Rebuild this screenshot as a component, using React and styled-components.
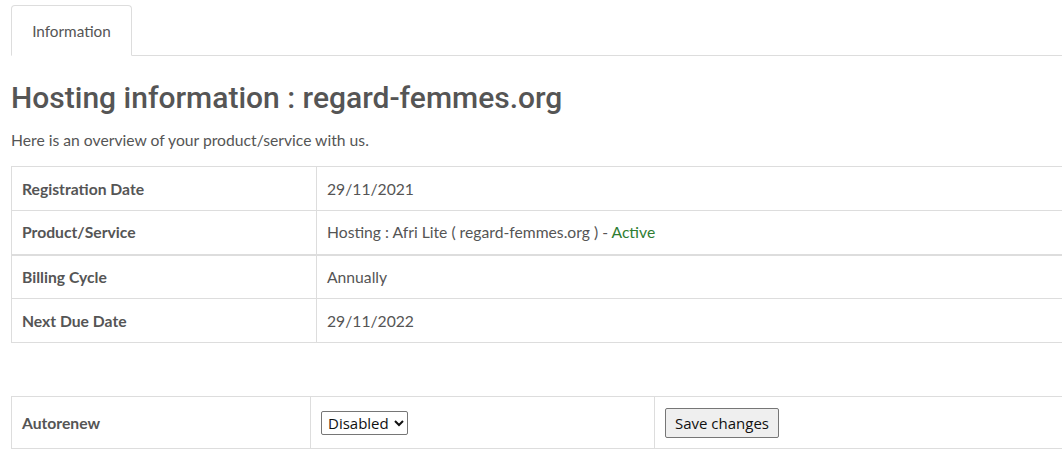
import React, { useState } from "react";
import styled, { createGlobalStyle } from "styled-components";

const Global = createGlobalStyle`
  body {
    margin: 0;
    background: #fff;
    overflow: hidden;
    font-family: "Lato", "Liberation Sans", sans-serif;
    color: #555;
  }
`;

const Page = styled.div`
  padding: 5px 0 0 11px;
  overflow: hidden;
`;

const Tabs = styled.div`
  display: flex;
  border-bottom: 1px solid #ddd;
  height: 50px;
`;

const Tab = styled.div`
  width: 121px;
  height: 51px;
  box-sizing: border-box;
  border: 1px solid #ddd;
  border-bottom-color: #fff;
  border-radius: 4px 4px 0 0;
  background: #fff;
  display: flex;
  align-items: center;
  justify-content: center;
  font-size: 15.3px;
  color: #555;
  margin-bottom: -1px;
`;

const Title = styled.h1`
  margin: 24px 0 0;
  font-family: "Roboto", "Liberation Sans", sans-serif;
  font-weight: 500;
  font-size: 30px;
  line-height: 36px;
  color: #555;
`;

const Lead = styled.p`
  margin: 14px 0 16px;
  font-size: 15.7px;
  line-height: 20px;
`;

const Table = styled.table`
  width: 1100px;
  border-collapse: collapse;
  margin-bottom: ${(p) => p.$gap || 0}px;
`;

const Row = styled.tr`
  border-bottom: ${(p) => (p.$thick ? "2px" : "1px")} solid #ddd;
`;

const Cell = styled.td`
  border: 1px solid #ddd;
  border-bottom: none;
  padding: 0 10px;
  height: ${(p) => p.$h || 44}px;
  box-sizing: border-box;
  font-size: 15.7px;
  font-weight: ${(p) => (p.$label ? 700 : 400)};
  width: ${(p) => (p.$w ? `${p.$w}px` : "auto")};
  vertical-align: middle;
`;

const Status = styled.span`
  color: #2f7d32;
`;

const Select = styled.select`
  font-family: "Open Sans", "DejaVu Sans", sans-serif;
  font-size: 15px;
  color: #111;
  height: 24px;
  padding: 0 2px;
  border: 1px solid #767676;
  border-radius: 2px;
  background: #fff;
`;

const Button = styled.button`
  font-family: "Open Sans", "DejaVu Sans", sans-serif;
  font-size: 15px;
  color: #111;
  height: 30px;
  padding: 0 9px;
  border: 1px solid #767676;
  border-radius: 2px;
  background: #efefef;
`;

const rows = [
  ["Registration Date", "29/11/2021"],
  ["Product/Service", null, true],
  ["Billing Cycle", "Annually"],
  ["Next Due Date", "29/11/2022"],
];

export default function App() {
  const [renew, setRenew] = useState("Disabled");
  return (
    <Page>
      <Global />
      <Tabs>
        <Tab>Information</Tab>
      </Tabs>
      <Title>Hosting information : regard-femmes.org</Title>
      <Lead>Here is an overview of your product/service with us.</Lead>
      <Table $gap={53}>
        <tbody>
          {rows.map(([label, value, thick]) => (
            <Row key={label} $thick={thick}>
              <Cell $label $w={305}>{label}</Cell>
              <Cell>
                {value || (
                  <>
                    Hosting : Afri Lite ( regard-femmes.org ) - <Status>Active</Status>
                  </>
                )}
              </Cell>
            </Row>
          ))}
        </tbody>
      </Table>
      <Table>
        <tbody>
          <Row>
            <Cell $label $w={299} $h={52}>Autorenew</Cell>
            <Cell $w={344} $h={52}>
              <Select value={renew} onChange={(e) => setRenew(e.target.value)}>
                <option>Disabled</option>
                <option>Enabled</option>
              </Select>
            </Cell>
            <Cell $h={52}>
              <Button>Save changes</Button>
            </Cell>
          </Row>
        </tbody>
      </Table>
    </Page>
  );
}
